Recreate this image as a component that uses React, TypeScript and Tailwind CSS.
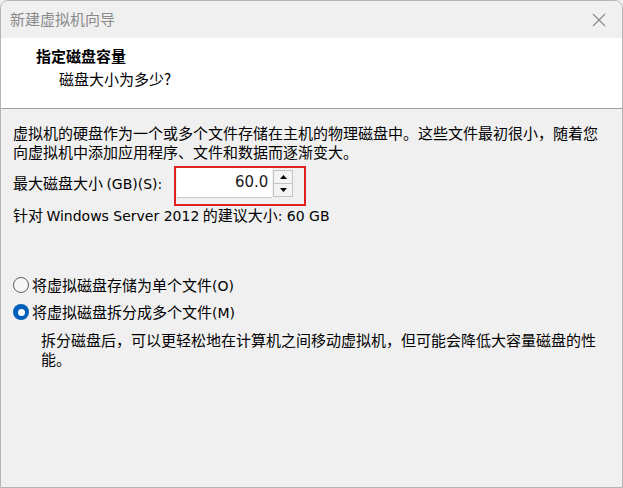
import React, { useState } from 'react';

const cjk = "font-['Noto_Sans_CJK_SC',sans-serif]";
const latin = "font-['DejaVu_Sans','Noto_Sans_CJK_SC',sans-serif] text-[14px]";

const Radio: React.FC<{ checked: boolean; onClick: () => void; children: React.ReactNode }> = ({ checked, onClick, children }) => (
  <div className="flex items-center h-[20px] cursor-default" onClick={onClick}>
    {checked ? (
      <span className="w-[16px] h-[16px] rounded-full bg-[#005fb8] flex items-center justify-center mr-[3px]">
        <span className="w-[7px] h-[7px] rounded-full bg-white" />
      </span>
    ) : (
      <span className="w-[16px] h-[16px] rounded-full border border-[#5c5c5c] bg-[#f7f7f7] mr-[3px]" />
    )}
    <span>{children}</span>
  </div>
);

const App: React.FC = () => {
  const [split, setSplit] = useState(true);
  const [size, setSize] = useState(60);

  return (
    <div className={`w-[623px] h-[488px] bg-[#f0f0f0] ${cjk} text-[15px] text-black`}>
      <div className="h-full flex flex-col border border-[#b4b4b4] rounded-t-[8px] overflow-hidden">
        {/* Title bar */}
        <div className="h-[37px] flex items-center justify-between pl-[9px] pr-[16px] bg-[#f0f0f0]">
          <span className="text-[#8a8a8a] text-[15px]">新建虚拟机向导</span>
          <svg width="14" height="14" viewBox="0 0 14 14" className="text-[#8a8a8a]">
            <path d="M1 1L13 13M13 1L1 13" stroke="currentColor" strokeWidth="1.2" fill="none" />
          </svg>
        </div>

        {/* Header */}
        <div className="h-[71px] bg-white border-b border-[#a0a0a0] pl-[35px] pt-[7px]">
          <div className="font-bold leading-[22px]">指定磁盘容量</div>
          <div className="pl-[23px] leading-[22px] mt-[1px]">磁盘大小为多少?</div>
        </div>

        {/* Body */}
        <div className="flex-1 pl-[12px] pr-[12px] pt-[14px] leading-[19px]">
          <p>虚拟机的硬盘作为一个或多个文件存储在主机的物理磁盘中。这些文件最初很小，随着您</p>
          <p>向虚拟机中添加应用程序、文件和数据而逐渐变大。</p>

          <div className="flex items-center mt-[6px] h-[32px]">
            <span>最大磁盘大小 <span className={latin}>(GB)(S):</span></span>
            <div className="relative ml-[15px] flex items-center">
              <div className="w-[95px] h-[30px] bg-white border-b border-[#c8c8c8] flex items-center justify-end pr-[4px]">
                <span className={`${latin} text-[15px] text-[#1a1a1a]`}>{size.toFixed(1)}</span>
              </div>
              <div className="flex flex-col ml-[1px] w-[20px] h-[27px] border border-[#c4c4c4] bg-[#f4f4f4]">
                <button className="flex-1 flex items-center justify-center border-b border-[#c4c4c4]" onClick={() => setSize(size + 1)}>
                  <svg width="7" height="4" viewBox="0 0 7 4"><path d="M3.5 0L7 4H0z" fill="#000" /></svg>
                </button>
                <button className="flex-1 flex items-center justify-center" onClick={() => setSize(Math.max(1, size - 1))}>
                  <svg width="7" height="4" viewBox="0 0 7 4"><path d="M0 0H7L3.5 4z" fill="#000" /></svg>
                </button>
              </div>
              {/* highlight annotation */}
              <div className="absolute left-[-3px] top-[-2px] w-[132px] h-[40px] border-2 border-[#e02020] pointer-events-none" />
            </div>
          </div>

          <p className="mt-[6px]">
            针对 <span className={latin}>Windows Server 2012</span> 的建议大小<span className={latin}>: 60 GB</span>
          </p>

          <div className="mt-[49px] flex flex-col gap-[7px]">
            <Radio checked={!split} onClick={() => setSplit(false)}>
              将虚拟磁盘存储为单个文件<span className={latin}>(O)</span>
            </Radio>
            <Radio checked={split} onClick={() => setSplit(true)}>
              将虚拟磁盘拆分成多个文件<span className={latin}>(M)</span>
            </Radio>
          </div>

          <div className="pl-[28px] mt-[8px] pr-[10px]">
            <p>拆分磁盘后，可以更轻松地在计算机之间移动虚拟机，但可能会降低大容量磁盘的性</p>
            <p>能。</p>
          </div>
        </div>
      </div>
    </div>
  );
};

export default App;
